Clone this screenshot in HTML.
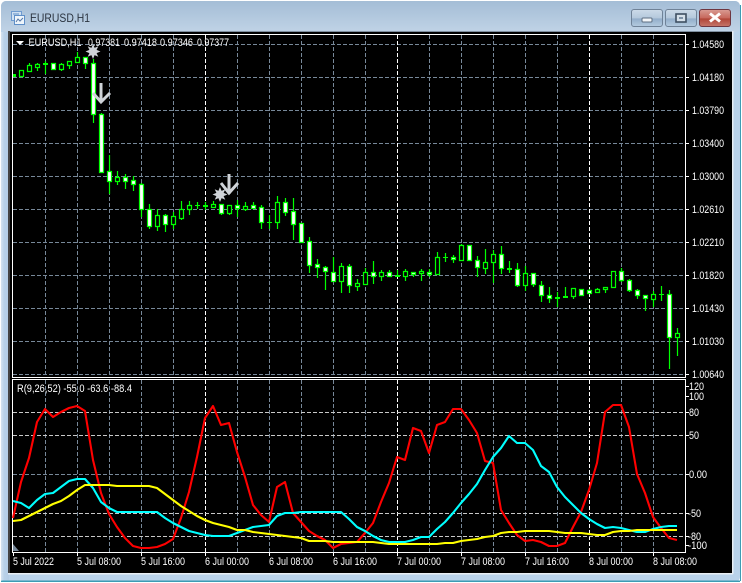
<!DOCTYPE html>
<html><head><meta charset="utf-8"><title>EURUSD,H1</title>
<style>
html,body{margin:0;padding:0;background:#fff;width:742px;height:583px;overflow:hidden}
svg{display:block}
text{font-family:"Liberation Sans",sans-serif;font-size:11px;fill:#fff}
</style></head><body>
<svg width="742" height="583" viewBox="0 0 742 583" xmlns="http://www.w3.org/2000/svg">
<defs>
<linearGradient id="tb" x1="0" y1="0" x2="0" y2="1"><stop offset="0" stop-color="#a4bdd6"/><stop offset="1" stop-color="#c0d3e6"/></linearGradient>
<linearGradient id="lf" x1="0" y1="0" x2="1" y2="0"><stop offset="0" stop-color="#d5e3f0"/><stop offset=".4" stop-color="#b8d1e9"/><stop offset="1" stop-color="#b4cde6"/></linearGradient>
<linearGradient id="bb" x1="0" y1="0" x2="0" y2="1"><stop offset="0" stop-color="#cddbe9"/><stop offset=".5" stop-color="#b4c8dc"/><stop offset=".55" stop-color="#93aeca"/><stop offset="1" stop-color="#b4cbe0"/></linearGradient>
<linearGradient id="cb" x1="0" y1="0" x2="0" y2="1"><stop offset="0" stop-color="#d99c94"/><stop offset=".5" stop-color="#c7685c"/><stop offset=".55" stop-color="#b04638"/><stop offset="1" stop-color="#c6766a"/></linearGradient>
</defs>

<!-- window frame -->
<rect x="0" y="0" width="742" height="583" fill="#fff"/>
<rect x="1" y="1" width="739" height="581" rx="5" fill="#b9d2ea"/>
<rect x="1" y="1" width="739" height="31" rx="5" fill="url(#tb)"/>
<rect x="1" y="32" width="8" height="548" fill="url(#lf)"/>
<rect x="1" y="580.5" width="739" height="1.5" fill="#3c9cb4"/>
<rect x="740" y="5" width="1" height="576" fill="#3c9cb4"/>
<rect x="8" y="31" width="725" height="543" fill="#000"/>
<rect x="8" y="31" width="725" height="1" fill="#7f8f9f"/>
<rect x="8" y="31" width="2" height="543" fill="#444"/>
<rect x="8" y="573" width="725" height="1.5" fill="#e8eef4"/>
<rect x="732" y="31" width="1.5" height="543" fill="#e8eef4"/>

<!-- title icon -->
<g>
<rect x="11.5" y="11.5" width="10" height="9" fill="#cfe0f2" stroke="#6f9bd0"/>
<rect x="14.5" y="15.5" width="10" height="9" fill="#eef5fb" stroke="#5f8fc8"/>
<path d="M16 22l2-3 2 2 3-3" fill="none" stroke="#5477a8"/>
<path d="M13 14h6" stroke="#5f8fc8"/>
</g>
<text x="30" y="22" textLength="60" lengthAdjust="spacingAndGlyphs" style="font-size:12px;fill:#2b3440">EURUSD,H1</text>

<!-- window buttons -->
<g stroke="#6f8297">
<rect x="631.5" y="9.5" width="31" height="17" rx="2.5" fill="url(#bb)"/>
<rect x="665.5" y="9.5" width="31" height="17" rx="2.5" fill="url(#bb)"/>
</g>
<rect x="699.5" y="9.5" width="31" height="17" rx="2.5" fill="url(#cb)" stroke="#6e3640"/>
<rect x="642" y="18" width="10" height="4" rx="1" fill="#f2f5f8" stroke="#5e6f82"/>
<rect x="676" y="14" width="10" height="8" fill="#d5e0ea" stroke="#3e4f62" stroke-width="1.6"/>
<rect x="679" y="17" width="4" height="2" fill="#7f93a8"/>
<path d="M710 13.5l10 8M720 13.5l-10 8" stroke="#fff" stroke-width="3"/>

<!-- grid main -->
<g fill="none" stroke="#778899" stroke-dasharray="4 2" stroke-width="1">
<path d="M13 44.5H685M13 77.5H685M13 110.5H685M13 143.5H685M13 176.5H685M13 209.5H685M13 242.5H685M13 275.5H685M13 308.5H685M13 341.5H685M13 374.5H685"/>
<path d="M45.5 35V377M77.5 35V377M109.5 35V377M141.5 35V377M173.5 35V377M237.5 35V377M269.5 35V377M301.5 35V377M333.5 35V377M365.5 35V377M429.5 35V377M461.5 35V377M493.5 35V377M525.5 35V377M557.5 35V377M621.5 35V377M653.5 35V377"/>
</g>
<path d="M205.5 35V377M397.5 35V377M589.5 35V377" stroke="#fff" stroke-dasharray="4 2" fill="none"/>

<!-- grid sub -->
<g fill="none" stroke="#778899" stroke-dasharray="4 2">
<path d="M45.5 380V552M77.5 380V552M109.5 380V552M141.5 380V552M173.5 380V552M237.5 380V552M269.5 380V552M301.5 380V552M333.5 380V552M365.5 380V552M429.5 380V552M461.5 380V552M493.5 380V552M525.5 380V552M557.5 380V552M621.5 380V552M653.5 380V552"/>
<path d="M13 474.5H685"/>
</g>
<path d="M205.5 380V552M397.5 380V552M589.5 380V552" stroke="#fff" stroke-dasharray="4 2" fill="none"/>
<path d="M13 412.5H685M13 435.5H685M13 513.5H685M13 536.5H685" stroke="#c8c8c8" stroke-dasharray="4 2" fill="none"/>

<!-- frames -->
<g fill="none" stroke="#fff">
<rect x="12.5" y="34.5" width="673" height="343"/>
<rect x="12.5" y="379.5" width="673" height="173"/>
<path d="M685 44.5h4M685 77.5h4M685 110.5h4M685 143.5h4M685 176.5h4M685 209.5h4M685 242.5h4M685 275.5h4M685 308.5h4M685 341.5h4M685 374.5h4M685 386.5h4M685 396.5h4M685 412.5h4M685 435.5h4M685 474.5h4M685 513.5h4M685 536.5h4M685 545.5h4"/>
<path d="M13.5 552v4M77.5 552v4M141.5 552v4M205.5 552v4M269.5 552v4M333.5 552v4M397.5 552v4M461.5 552v4M525.5 552v4M589.5 552v4M653.5 552v4"/>
</g>

<!-- wicks -->
<path fill="none" stroke="#0f0" stroke-width="1.2" d="M29.5 63V72M37.5 63V71M45.5 61V74M53.5 63V70M61.5 63V71M69.5 61V69M77.5 52V63M85.5 57V69M93.5 59V123M101.5 113V173M109.5 155V194M117.5 171V185M125.5 174V189M133.5 176V191M141.5 183V217M149.5 204V229M157.5 209V231M165.5 214V232M173.5 212V229M181.5 201V220M189.5 201V215M197.5 202V209M205.5 202V210M213.5 201V208M221.5 204V215M229.5 205V215M237.5 200V217M245.5 202V211M253.5 202V208M261.5 205V229M269.5 215V229M277.5 196V229M285.5 198V216M293.5 198V240M301.5 223V243M309.5 237V273M317.5 259V278M325.5 266V290M333.5 257V281M341.5 263V293M349.5 264V293M357.5 279V291M365.5 268V285M373.5 261V284M381.5 270V281M389.5 270V277M397.5 270V277M405.5 269V281M413.5 272V277M421.5 269V281M429.5 269V277M437.5 252V275M445.5 253V262M453.5 255V263M461.5 244V261M469.5 245V261M477.5 256V277M485.5 249V274M493.5 250V283M501.5 246V274M509.5 261V273M517.5 263V287M525.5 266V291M533.5 273V287M541.5 281V302M549.5 287V303M557.5 292V307M565.5 287V298M573.5 288V299M581.5 289V296M589.5 289V294M597.5 288V293M605.5 287V293M613.5 271V288M621.5 268V282M629.5 279V292M637.5 289V299M645.5 295V311M653.5 291V307M661.5 286V301M669.5 290V369M677.5 328V356"/>

<!-- hollow bodies -->
<path fill="#000" stroke="#0f0" stroke-width="1.2" d="M19.5 70.5h4v6h-4zM27.5 65.5h4v6h-4zM35.5 64.5h4v3h-4zM59.5 64.5h4v5h-4zM67.5 61.5h4v4h-4zM75.5 57.5h4v5h-4zM115.5 177.5h4v4h-4zM155.5 215.5h4v11h-4zM171.5 216.5h4v8h-4zM179.5 209.5h4v9h-4zM187.5 205.5h4v4h-4zM211.5 204.5h4v3h-4zM227.5 205.5h4v8h-4zM243.5 206.5h4v3h-4zM275.5 202.5h4v20h-4zM339.5 266.5h4v15h-4zM355.5 283.5h4v3h-4zM363.5 272.5h4v12h-4zM379.5 272.5h4v4h-4zM403.5 271.5h4v5h-4zM419.5 271.5h4v2h-4zM435.5 257.5h4v17h-4zM459.5 245.5h4v15h-4zM483.5 262.5h4v6h-4zM491.5 254.5h4v8h-4zM523.5 273.5h4v12h-4zM571.5 288.5h4v8h-4zM595.5 289.5h4v3h-4zM603.5 287.5h4v2h-4zM611.5 271.5h4v16h-4zM651.5 294.5h4v5h-4zM675.5 333.5h4v4h-4z"/>

<!-- white bodies -->
<path fill="#fff" stroke="#0f0" stroke-width="1.2" d="M51.5 63.5h4v6h-4zM83.5 57.5h4v6h-4zM91.5 63.5h4v51h-4zM99.5 114.5h4v58h-4zM107.5 171.5h4v10h-4zM123.5 177.5h4v4h-4zM131.5 180.5h4v4h-4zM139.5 184.5h4v25h-4zM147.5 209.5h4v17h-4zM163.5 215.5h4v9h-4zM219.5 204.5h4v9h-4zM235.5 205.5h4v3h-4zM251.5 205.5h4v3h-4zM259.5 207.5h4v15h-4zM283.5 202.5h4v10h-4zM291.5 211.5h4v13h-4zM299.5 223.5h4v19h-4zM307.5 241.5h4v24h-4zM315.5 264.5h4v3h-4zM323.5 267.5h4v4h-4zM331.5 272.5h4v9h-4zM347.5 266.5h4v19h-4zM371.5 272.5h4v4h-4zM387.5 272.5h4v4h-4zM411.5 272.5h4v2h-4zM427.5 272.5h4v2h-4zM451.5 257.5h4v2h-4zM467.5 245.5h4v15h-4zM475.5 260.5h4v7h-4zM499.5 254.5h4v14h-4zM515.5 269.5h4v16h-4zM531.5 273.5h4v11h-4zM539.5 285.5h4v10h-4zM547.5 295.5h4v3h-4zM579.5 289.5h4v6h-4zM587.5 290.5h4v3h-4zM619.5 271.5h4v9h-4zM627.5 280.5h4v10h-4zM635.5 290.5h4v5h-4zM643.5 295.5h4v3h-4zM667.5 294.5h4v43h-4z"/>

<!-- doji -->
<path fill="#0f0" d="M13 74h3v3h-3zM43 63h5v2h-5zM195 205h5v1h-5zM203 205h5v2h-5zM267 222h5v1h-5zM395 275h5v2h-5zM443 257h5v1h-5zM507 268h5v2h-5zM555 297h5v2h-5zM563 296h5v2h-5zM659 294h5v1h-5z"/>

<!-- stars + arrows -->
<g fill="#cfd3d8">
<path d="M93 44l1.6 3.9 3.7-1.7-1.7 3.7 3.9 1.6-3.9 1.6 1.7 3.7-3.7-1.7-1.6 3.9-1.6-3.9-3.7 1.7 1.7-3.7-3.9-1.6 3.9-1.6-1.7-3.7 3.7 1.7z"/>
<path d="M220 187l1.6 3.9 3.7-1.7-1.7 3.7 3.9 1.6-3.9 1.6 1.7 3.7-3.7-1.7-1.6 3.9-1.6-3.9-3.7 1.7 1.7-3.7-3.9-1.6 3.9-1.6-1.7-3.7 3.7 1.7z"/>
</g>
<g fill="none" stroke="#cfd3d8" stroke-width="3">
<path d="M101 83V102M93 93l8 9 9-9"/>
<path d="M229 174V194M221 183l8 10 9-10"/>
</g>

<!-- lines -->
<g fill="none" stroke-width="2.1" stroke-linejoin="round">
<polyline stroke="#ff0000" points="13,518 21,482 29,458 37,422 45,409 53,417 61,412 69,408 77,406 85,411 93,460 101,493 109,514 117,527 125,538 133,546 141,548 149,548 157,547 165,544 173,539 181,518 189,492 197,457 205,418 213,406 221,425 229,423 237,452 245,477 253,505 261,515 269,522 277,487 285,482 293,513 301,522 309,531 317,536 325,540 333,548 341,544 349,543 357,542 365,533 373,523 381,502 389,483 397,457 405,460 413,428 421,431 429,453 437,425 445,422 453,409 461,409 469,420 477,433 485,461 493,463 501,510 509,523 517,535 525,541 533,540 541,542 549,546 557,546 565,543 573,527 581,512 589,490 597,463 605,412 613,405 621,405 629,427 637,474 645,493 653,517 661,528 669,538 677,540"/>
<polyline stroke="#00ffff" points="13,501 21,503 29,508 37,500 45,494 53,493 61,487 69,481 77,479 85,479 93,488 101,502 109,508 117,512 125,512 133,512 141,512 149,512 157,512 165,518 173,523 181,527 189,531 197,533 205,535 213,536 221,536 229,536 237,533 245,530 253,527 261,526 269,525 277,516 285,513 293,513 301,512 309,512 317,512 325,512 333,512 341,512 349,519 357,527 365,531 373,536 381,540 389,542 397,542 405,542 413,540 421,537 429,537 437,529 445,522 453,513 461,503 469,494 477,484 485,470 493,457 501,448 509,436 517,443 525,443 533,450 541,466 549,472 557,487 565,497 573,505 581,513 589,519 597,524 605,528 613,527 621,528 629,530 637,532 645,532 653,529 661,527 669,526 677,526"/>
<polyline stroke="#ffff00" points="13,521 21,520 29,516 37,512 45,508 53,504 61,501 69,496 77,490 85,485 93,485 101,485 109,485 117,486 125,486 133,486 141,486 149,486 157,488 165,494 173,500 181,506 189,511 197,516 205,520 213,523 221,525 229,527 237,530 245,530 253,532 261,533 269,534 277,535 285,536 293,537 301,538 309,541 317,541 325,541 333,542 341,542 349,542 357,542 365,542 373,542 381,543 389,544 397,544 405,544 413,544 421,544 429,544 437,544 445,543 453,543 461,541 469,540 477,539 485,537 493,536 501,533 509,532 517,532 525,531 533,531 541,531 549,531 557,532 565,533 573,533 581,533 589,534 597,535 605,535 613,532 621,531 629,531 637,530 645,530 653,530 661,530 669,530 677,530"/>
</g>

<!-- markers -->
<path d="M16 41h8l-4 4z" fill="#fff"/>
<path d="M13 544l6 7h-6z" fill="#778899"/>

<!-- header text -->
<text x="28.5" y="46" textLength="53" lengthAdjust="spacingAndGlyphs">EURUSD,H1</text>
<text x="88" y="46" textLength="32" lengthAdjust="spacingAndGlyphs">0.97381</text>
<text x="124" y="46" textLength="33" lengthAdjust="spacingAndGlyphs">0.97418</text>
<text x="160" y="46" textLength="33" lengthAdjust="spacingAndGlyphs">0.97346</text>
<text x="197" y="46" textLength="32" lengthAdjust="spacingAndGlyphs">0.97377</text>
<text x="17" y="392" textLength="115" lengthAdjust="spacingAndGlyphs">R(9,26,52) -55.0 -63.6 -88.4</text>

<!-- price axis -->
<text x="692" y="48" textLength="32" lengthAdjust="spacingAndGlyphs">1.04580</text>
<text x="692" y="81" textLength="32" lengthAdjust="spacingAndGlyphs">1.04180</text>
<text x="692" y="114" textLength="32" lengthAdjust="spacingAndGlyphs">1.03790</text>
<text x="692" y="147" textLength="32" lengthAdjust="spacingAndGlyphs">1.03400</text>
<text x="692" y="180" textLength="32" lengthAdjust="spacingAndGlyphs">1.03000</text>
<text x="692" y="213" textLength="32" lengthAdjust="spacingAndGlyphs">1.02610</text>
<text x="692" y="246" textLength="32" lengthAdjust="spacingAndGlyphs">1.02210</text>
<text x="692" y="279" textLength="32" lengthAdjust="spacingAndGlyphs">1.01820</text>
<text x="692" y="312" textLength="32" lengthAdjust="spacingAndGlyphs">1.01430</text>
<text x="692" y="345" textLength="32" lengthAdjust="spacingAndGlyphs">1.01030</text>
<text x="692" y="378" textLength="32" lengthAdjust="spacingAndGlyphs">1.00640</text>

<text x="689" y="390" textLength="15" lengthAdjust="spacingAndGlyphs">120</text>
<text x="689" y="400" textLength="15" lengthAdjust="spacingAndGlyphs">100</text>
<text x="689" y="416" textLength="10" lengthAdjust="spacingAndGlyphs">80</text>
<text x="689" y="439" textLength="10" lengthAdjust="spacingAndGlyphs">50</text>
<text x="689" y="478" textLength="18" lengthAdjust="spacingAndGlyphs">0.00</text>
<text x="688" y="517" textLength="13" lengthAdjust="spacingAndGlyphs">-50</text>
<text x="688" y="540" textLength="13" lengthAdjust="spacingAndGlyphs">-80</text>
<text x="688" y="549" textLength="19" lengthAdjust="spacingAndGlyphs">-100</text>

<!-- time axis -->
<text x="13" y="565" textLength="41" lengthAdjust="spacingAndGlyphs">5 Jul 2022</text>
<text x="77" y="565" textLength="44" lengthAdjust="spacingAndGlyphs">5 Jul 08:00</text>
<text x="141" y="565" textLength="44" lengthAdjust="spacingAndGlyphs">5 Jul 16:00</text>
<text x="205" y="565" textLength="44" lengthAdjust="spacingAndGlyphs">6 Jul 00:00</text>
<text x="269" y="565" textLength="44" lengthAdjust="spacingAndGlyphs">6 Jul 08:00</text>
<text x="333" y="565" textLength="44" lengthAdjust="spacingAndGlyphs">6 Jul 16:00</text>
<text x="397" y="565" textLength="44" lengthAdjust="spacingAndGlyphs">7 Jul 00:00</text>
<text x="461" y="565" textLength="44" lengthAdjust="spacingAndGlyphs">7 Jul 08:00</text>
<text x="525" y="565" textLength="44" lengthAdjust="spacingAndGlyphs">7 Jul 16:00</text>
<text x="589" y="565" textLength="44" lengthAdjust="spacingAndGlyphs">8 Jul 00:00</text>
<text x="653" y="565" textLength="44" lengthAdjust="spacingAndGlyphs">8 Jul 08:00</text>
</svg>
</body></html>
